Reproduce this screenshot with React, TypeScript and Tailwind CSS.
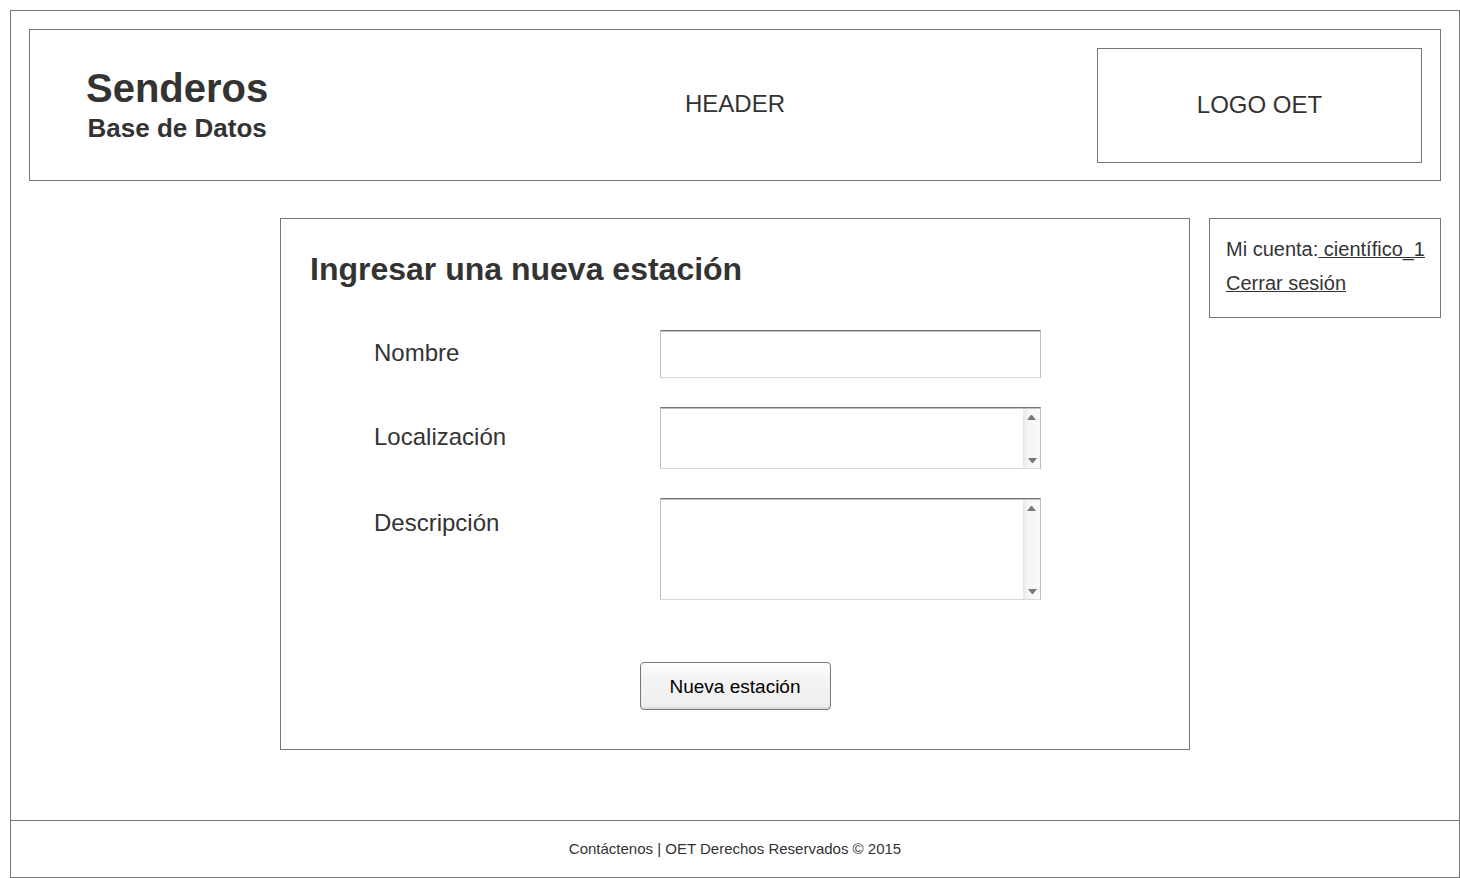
import React from "react";

function TextArea({ id, height }: { id: string; height: string }) {
  return (
    <div
      className={`flex border border-t-[#777777] border-x-[#bdbdbd] border-b-[#dadada] bg-white shadow-[inset_0_1px_0_#c0c0c0] ${height}`}
    >
      <textarea
        id={id}
        name={id}
        className="min-w-0 flex-1 resize-none bg-transparent px-2 py-1 text-xl outline-none"
      />
      <div
        aria-hidden="true"
        className="mt-px flex w-[17px] flex-col items-center justify-between bg-linear-to-r from-[#e6e6e6] via-[#f4f4f4] via-25% to-[#fafafa] pt-1.5 pb-[5px]"
      >
        <svg width="9" height="5" viewBox="0 0 9 5" fill="#777777">
          <path d="M0 5 4 0H5L9 5Z" />
        </svg>
        <svg width="11" height="5" viewBox="-2 0 11 5" fill="#777777">
          <path d="M0 0H9L5 5H4Z" />
        </svg>
      </div>
    </div>
  );
}

export default function App() {
  return (
    <div className="flex min-h-screen flex-col bg-white pt-2.5 pl-2.5 font-['Liberation_Sans',Arial,sans-serif] text-[#333333]">
      <div className="flex flex-1 flex-col border border-[#777777]">
        <div className="flex-1 px-[18px] pt-[18px] pb-[70px]">
          <header className="grid grid-cols-[325px_1fr_325px] items-center border border-[#777777] px-[18px] pt-[18px] pb-[17px]">
            <div className="flex pt-1">
              <div className="pl-[38px] text-center font-bold">
                <h1 className="text-[40px] leading-[40px]">Senderos</h1>
                <p className="text-[26px] leading-10">Base de Datos</p>
              </div>
            </div>
            <div className="pb-1 text-center text-2xl">HEADER</div>
            <div className="flex h-[115px] items-center justify-center border border-[#777777] pb-0.5 text-2xl">
              LOGO OET
            </div>
          </header>

          <div className="mt-[37px] grid grid-cols-[232px_1fr_232px] items-start gap-[19px]">
            <main className="col-start-2 border border-[#777777] px-[29px] pt-8 pb-[39px]">
              <h2 className="text-[32px] leading-9 font-bold">Ingresar una nueva estación</h2>
              <form onSubmit={(event) => event.preventDefault()}>
                <div className="mt-[43px] grid grid-cols-[286px_1fr] items-center gap-y-[29px] pr-[119px] pl-16">
                  <label htmlFor="nombre" className="pb-0.5 text-2xl">
                    Nombre
                  </label>
                  <input
                    id="nombre"
                    name="nombre"
                    type="text"
                    className="h-12 w-full border border-t-[#777777] border-x-[#bdbdbd] border-b-[#dadada] bg-white px-2 text-xl shadow-[inset_0_1px_0_#c0c0c0] outline-none"
                  />
                  <label htmlFor="localizacion" className="pb-0.5 text-2xl">
                    Localización
                  </label>
                  <TextArea id="localizacion" height="h-[62px]" />
                  <label htmlFor="descripcion" className="self-start pt-[9px] text-2xl">
                    Descripción
                  </label>
                  <TextArea id="descripcion" height="h-[102px]" />
                </div>
                <div className="mt-[62px] flex justify-center">
                  <button
                    type="submit"
                    className="h-12 w-[191px] rounded-[4px] border border-[#777777] bg-linear-to-b from-white via-[#f5f5f5] via-30% to-[#ededed] pt-0.5 text-[19px] text-black shadow-[inset_0_-2px_1px_#dcdcdc]"
                  >
                    Nueva estación
                  </button>
                </div>
              </form>
            </main>
            <aside className="border border-[#777777] px-4 pt-[13px] pb-[17px] text-xl leading-[34px] whitespace-nowrap">
              <div className="flex">
                <span>Mi cuenta:</span>
                <a href="#cuenta" className="whitespace-pre underline decoration-1">
                  {" científico_1"}
                </a>
              </div>
              <a href="#salir" className="underline decoration-1">
                Cerrar sesión
              </a>
            </aside>
          </div>
        </div>
        <footer className="flex h-[57px] items-center justify-center border-t border-[#777777] text-[15px]">
          Contáctenos | OET Derechos Reservados © 2015
        </footer>
      </div>
    </div>
  );
}
